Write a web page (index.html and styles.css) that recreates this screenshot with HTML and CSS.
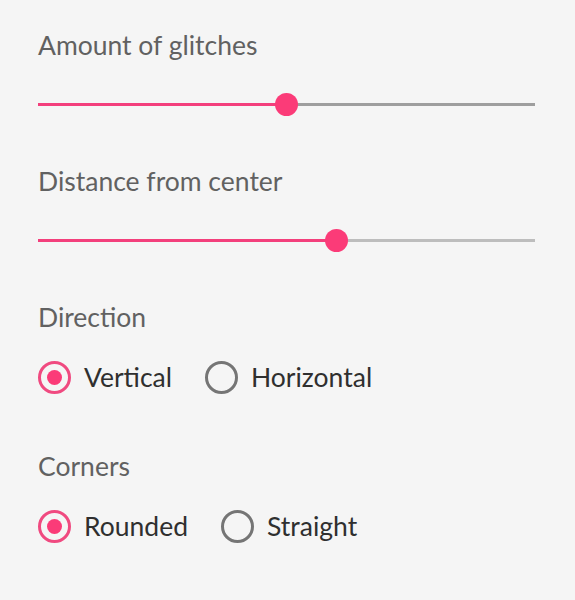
FILE: index.html
```html
<!DOCTYPE html>
<html>
<head>
<meta charset="utf-8">
<link rel="stylesheet" href="styles.css">
</head>
<body>
<div class="panel">
  <section class="group">
    <div class="label">Amount of glitches</div>
    <div class="slider">
      <div class="track-on" style="width:50%"></div>
      <div class="thumb"></div>
      <div class="track-off dark"></div>
    </div>
  </section>
  <section class="group">
    <div class="label">Distance from center</div>
    <div class="slider">
      <div class="track-on" style="width:60%"></div>
      <div class="thumb"></div>
      <div class="track-off"></div>
    </div>
  </section>
  <section class="group radios-group">
    <div class="label">Direction</div>
    <div class="radios">
      <label class="radio checked"><span class="ring"></span><span class="text">Vertical</span></label>
      <label class="radio"><span class="ring"></span><span class="text">Horizontal</span></label>
    </div>
  </section>
  <section class="group radios-group">
    <div class="label">Corners</div>
    <div class="radios">
      <label class="radio checked"><span class="ring"></span><span class="text">Rounded</span></label>
      <label class="radio"><span class="ring"></span><span class="text">Straight</span></label>
    </div>
  </section>
</div>
</body>
</html>
```
FILE: styles.css
```css
html, body {
  margin: 0;
  padding: 0;
  background: #f5f5f5;
}
body {
  font-family: Lato, "Open Sans", sans-serif;
  width: 575px;
  height: 600px;
  overflow: hidden;
}
.panel {
  padding: 28px 40px 0 38px;
  display: flex;
  flex-direction: column;
}
.group {
  display: flex;
  flex-direction: column;
  margin-bottom: 44px;
}
.label {
  font-size: 26.5px;
  line-height: 34px;
  color: #616161;
}
.slider {
  margin-top: 26px;
  height: 32px;
  display: flex;
  align-items: center;
  position: relative;
}
.track-on {
  height: 3px;
  background: #f33f7c;
}
.track-off {
  flex: 1;
  height: 3px;
  background: #bdbdbd;
}
.track-off.dark {
  background: #9e9e9e;
}
.thumb {
  width: 23px;
  height: 23px;
  border-radius: 50%;
  background: #fb3b78;
  margin: 0 -11.5px;
  position: relative;
  z-index: 1;
}
.radios-group {
  margin-bottom: 55px;
}
.radios {
  margin-top: 26px;
  display: flex;
  align-items: center;
  gap: 33px;
}
.radio {
  display: flex;
  align-items: center;
  gap: 13px;
}
.ring {
  box-sizing: border-box;
  width: 33px;
  height: 33px;
  border-radius: 50%;
  border: 3px solid #757575;
  display: flex;
  align-items: center;
  justify-content: center;
}
.radio.checked .ring {
  border-color: #f04a80;
}
.radio.checked .ring::after {
  content: "";
  width: 15px;
  height: 15px;
  border-radius: 50%;
  background: #fb3b78;
}
.text {
  font-size: 26.5px;
  line-height: 34px;
  color: #2f2f2f;
}
```
